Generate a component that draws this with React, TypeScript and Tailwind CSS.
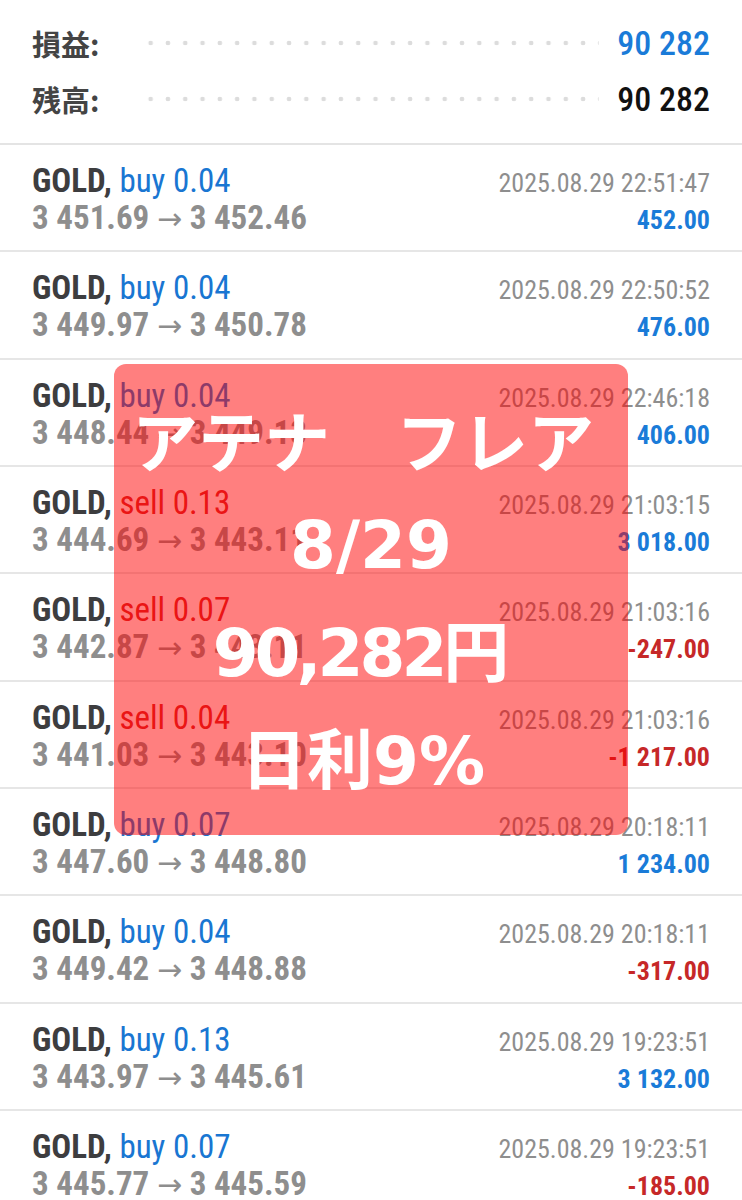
import React from "react";

type Trade = {
  side: "buy" | "sell";
  lot: string;
  open: string;
  close: string;
  time: string;
  profit: string;
};

const trades: Trade[] = [
  { side: "buy", lot: "0.04", open: "3 451.69", close: "3 452.46", time: "2025.08.29 22:51:47", profit: "452.00" },
  { side: "buy", lot: "0.04", open: "3 449.97", close: "3 450.78", time: "2025.08.29 22:50:52", profit: "476.00" },
  { side: "buy", lot: "0.04", open: "3 448.44", close: "3 449.13", time: "2025.08.29 22:46:18", profit: "406.00" },
  { side: "sell", lot: "0.13", open: "3 444.69", close: "3 443.11", time: "2025.08.29 21:03:15", profit: "3 018.00" },
  { side: "sell", lot: "0.07", open: "3 442.87", close: "3 443.11", time: "2025.08.29 21:03:16", profit: "-247.00" },
  { side: "sell", lot: "0.04", open: "3 441.03", close: "3 443.10", time: "2025.08.29 21:03:16", profit: "-1 217.00" },
  { side: "buy", lot: "0.07", open: "3 447.60", close: "3 448.80", time: "2025.08.29 20:18:11", profit: "1 234.00" },
  { side: "buy", lot: "0.04", open: "3 449.42", close: "3 448.88", time: "2025.08.29 20:18:11", profit: "-317.00" },
  { side: "buy", lot: "0.13", open: "3 443.97", close: "3 445.61", time: "2025.08.29 19:23:51", profit: "3 132.00" },
  { side: "buy", lot: "0.07", open: "3 445.77", close: "3 445.59", time: "2025.08.29 19:23:51", profit: "-185.00" },
];

const cond = "font-['Roboto_Condensed','Roboto','Liberation_Sans_Narrow',sans-serif] font-stretch-condensed";

function HeaderRow({ label, value, blue }: { label: string; value: string; blue?: boolean }) {
  return (
    <div className="flex items-center h-[56px]">
      <span className="font-['Noto_Sans_CJK_JP',sans-serif] font-bold text-[29px] text-[#444] w-[110px] leading-none">
        {label}
      </span>
      <div className="flex-1 h-[6px] bg-[radial-gradient(circle,#dcdcdc_2px,transparent_2.6px)] bg-[length:17.3px_6px] bg-repeat-x mr-[18px]" />
      <span className={`${cond} text-[34px] font-medium leading-none ${blue ? "text-[#1a7bd8]" : "text-[#111]"}`}>
        {value}
      </span>
    </div>
  );
}

function TradeRow({ t }: { t: Trade }) {
  const neg = t.profit.startsWith("-");
  return (
    <div className={`${cond} h-[107.33px] border-b-2 border-[#e6e6e6] px-[32px] pt-[17px]`}>
      <div className="flex justify-between items-baseline h-[37px]">
        <span className="text-[33px] leading-[37px] text-[#3d3d3f]">
          <span className="font-bold">GOLD,</span>{" "}
          <span className={t.side === "buy" ? "text-[#1976d2]" : "text-[#d42a2a]"}>
            {t.side} {t.lot}
          </span>
        </span>
        <span className="text-[26px] leading-[37px] text-[#8e8e8e]">{t.time}</span>
      </div>
      <div className="flex justify-between items-baseline h-[37px]">
        <span className="text-[33px] leading-[37px] font-bold text-[#8e8e8e]">
          {t.open}{" "}
          <span className="font-['DejaVu_Sans',sans-serif] font-normal text-[30px] font-stretch-normal">→</span>{" "}
          {t.close}
        </span>
        <span className={`text-[26px] leading-[37px] font-bold ${neg ? "text-[#c62828]" : "text-[#1a7bd8]"}`}>
          {t.profit}
        </span>
      </div>
    </div>
  );
}

export default function App() {
  return (
    <div className="relative w-[742px] h-[1200px] overflow-hidden bg-white">
      <div className="h-[145px] border-b-2 border-[#e4e4e4] px-[32px] pt-[15px]">
        <HeaderRow label="損益:" value="90 282" blue />
        <HeaderRow label="残高:" value="90 282" />
      </div>
      {trades.map((t, i) => (
        <TradeRow key={i} t={t} />
      ))}
      <div className="absolute left-[114px] top-[364px] w-[514px] h-[471px] rounded-[12px] bg-[rgba(255,0,0,0.5)] flex flex-col items-center justify-center font-['DejaVu_Sans','Noto_Sans_CJK_JP',sans-serif] font-bold text-white leading-[108px] text-[66px]">
        <div className="whitespace-pre mr-[16px] font-['Noto_Sans_CJK_JP',sans-serif]">アテナ　フレア</div>
        <div>8/29</div>
        <div className="tracking-[-4px] mr-[24px]">90,282円</div>
        <div className="mr-[16px]">日利9%</div>
      </div>
    </div>
  );
}
